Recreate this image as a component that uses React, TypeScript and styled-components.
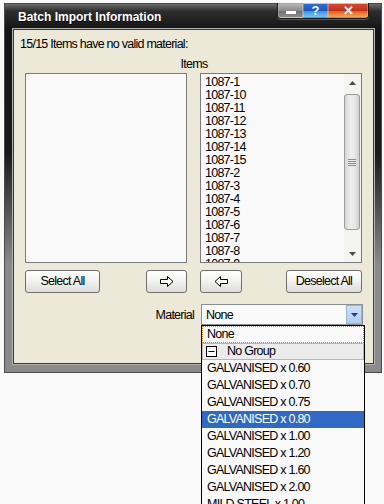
import { createGlobalStyle, styled } from "styled-components";

const UI_FONT = `"Liberation Sans", Arial, sans-serif`;

const GlobalStyle = createGlobalStyle`
  html, body {
    margin: 0;
    padding: 0;
    background: #f9f9f9;
  }
  body {
    width: 384px;
    height: 504px;
    overflow: hidden;
    font-family: ${UI_FONT};
    font-size: 12.5px;
    letter-spacing: -0.75px;
    color: #000;
  }
`;

const Page = styled.div`
  width: 384px;
  height: 504px;
  padding: 3px 0 0 4px;
  box-sizing: border-box;
`;

const Window = styled.div`
  width: 378px;
  box-sizing: border-box;
  border: 1px solid #4a4a4a;
  padding: 0 7px 8px 8px;
  background: linear-gradient(
    to bottom,
    #6c6c6c 0px,
    #2e2e2e 7px,
    #141414 26px,
    #1a1a1a 150px,
    #8a8a8a 260px,
    #8a8a8a 100%
  );
`;

const TitleBar = styled.div`
  height: 25px;
  display: flex;
  align-items: flex-start;
  justify-content: space-between;
  margin: 0 5px 0 5px;
`;

const Title = styled.span`
  font-family: "Liberation Sans", Arial, sans-serif;
  font-weight: bold;
  font-size: 12px;
  letter-spacing: 0;
  line-height: 25px;
  padding-top: 1px;
  color: #fff;
  text-shadow: 0 1px 0 #000;
`;

const CaptionButtons = styled.div`
  display: flex;
  margin-top: -1px;
  padding: 0 1px 1px 1px;
  background: #1c1c1c;
  border-radius: 0 0 4px 4px;
  box-shadow: 0 1px 0 #555;
`;

const CaptionButton = styled.div<{ $kind: "min" | "help" | "close" }>`
  width: ${(p) => (p.$kind === "close" ? 40 : 25)}px;
  height: 15px;
  box-sizing: border-box;
  border: 1px solid rgba(255, 255, 255, 0.25);
  border-radius: ${(p) =>
    p.$kind === "min" ? "0 0 0 3px" : p.$kind === "close" ? "0 0 3px 0" : "0"};
  display: flex;
  align-items: center;
  justify-content: center;
  color: #fff;
  font-family: "Liberation Sans", Arial, sans-serif;
  font-weight: bold;
  font-size: 13px;
  letter-spacing: 0;
  background: ${(p) =>
    p.$kind === "min"
      ? "linear-gradient(to bottom, #b4b4b4, #8a8a8a 50%, #6e6e6e 51%, #8c8c8c)"
      : p.$kind === "help"
      ? "linear-gradient(to bottom, #2d6fd6, #1b56c0 50%, #3a8ee0 51%, #74c6f4)"
      : "linear-gradient(to bottom, #d84a2c, #c0301a 50%, #e0561e 51%, #f4a84c)"};
`;

const MinDash = styled.div`
  width: 10px;
  height: 3px;
  background: #fff;
  margin-top: 3px;
`;

const Client = styled.div`
  background: #ece9d8;
  border: 1px solid #3a3a3a;
  box-shadow: 0 0 0 1px #b2b2b2;
  padding: 7px 10px 38px 11px;
  position: relative;
`;

const Heading = styled.div`
  line-height: 15px;
  margin-left: -5px;
  white-space: nowrap;
`;

const ColumnsLabel = styled.div`
  line-height: 15px;
  text-align: center;
  margin: 5px 0 1px;
`;

const TwoCols = styled.div`
  display: grid;
  grid-template-columns: 162px 162px;
  column-gap: 13px;
`;

const ListBox = styled.div`
  height: 190px;
  box-sizing: border-box;
  border: 1px solid #7a7a7a;
  background: #f9f9f9;
  display: flex;
  overflow: hidden;
`;

const ListItems = styled.div`
  flex: 1;
  padding: 2px 0 0 4px;
  overflow: hidden;
`;

const ListItem = styled.div`
  height: 13px;
  line-height: 13px;
  white-space: nowrap;
`;

const ScrollBar = styled.div`
  width: 17px;
  display: flex;
  flex-direction: column;
  background: #f4f4f1;
`;

const ScrollArrow = styled.div`
  height: 17px;
  display: flex;
  align-items: center;
  justify-content: center;
`;

const ScrollTrack = styled.div`
  flex: 1;
  padding: 3px 1px 0 0;
`;

const Thumb = styled.div`
  height: 136px;
  box-sizing: border-box;
  border: 1px solid #9c9c9c;
  border-radius: 3px;
  background: linear-gradient(to right, #d6d6d4, #eeeeec 40%, #e6e6e4 70%, #cfcfcd);
  display: flex;
  align-items: center;
  justify-content: center;
`;

const ButtonGroup = styled.div`
  display: flex;
  justify-content: space-between;
`;

const ButtonRow = styled(TwoCols)`
  margin-top: 7px;
`;

const PushButton = styled.div<{ $w: number }>`
  width: ${(p) => p.$w}px;
  height: 23px;
  box-sizing: border-box;
  border: 1px solid #6f6f6f;
  border-radius: 3px;
  background: linear-gradient(to bottom, #ffffff, #f3f3f1 45%, #dcdcda 100%);
  display: flex;
  align-items: center;
  justify-content: center;
  line-height: 15px;
  white-space: nowrap;
`;

const MaterialRow = styled.div`
  display: flex;
  justify-content: flex-end;
  align-items: center;
  gap: 7px;
  margin-top: 11px;
`;

const Combo = styled.div`
  position: relative;
  width: 162px;
  height: 21px;
  box-sizing: border-box;
  border: 1px solid #8a8f96;
  background: #f9f9f9;
  display: flex;
  align-items: center;
  padding-left: 4px;
`;

const ComboText = styled.span`
  flex: 1;
`;

const ComboButton = styled.div`
  width: 16px;
  height: 19px;
  box-sizing: border-box;
  border: 1px solid #9bb4db;
  background: linear-gradient(to bottom, #cfe0f7, #b4cbee);
  display: flex;
  align-items: center;
  justify-content: center;
`;

const DropList = styled.div`
  position: absolute;
  top: 20px;
  left: -1px;
  width: 164px;
  box-sizing: border-box;
  border: 1px solid #000;
  background: #f9f9f9;
  z-index: 10;
`;

const DropItem = styled.div<{ $selected?: boolean; $focused?: boolean }>`
  height: 17px;
  padding-left: 4px;
  box-sizing: border-box;
  white-space: nowrap;
  background: ${(p) => (p.$selected ? "#316ac5" : "transparent")};
  color: ${(p) => (p.$selected ? "#fff" : "#000")};
  border: 1px dotted ${(p) => (p.$focused ? "#c8861a" : "transparent")};
  line-height: 15px;
`;

const GroupItem = styled.div`
  height: 17px;
  box-sizing: border-box;
  border: 1px solid #b6b6b6;
  background: #ececec;
  display: flex;
  align-items: center;
  padding-left: 3px;
  gap: 10px;
  line-height: 15px;
`;

const items = [
  "1087-1",
  "1087-10",
  "1087-11",
  "1087-12",
  "1087-13",
  "1087-14",
  "1087-15",
  "1087-2",
  "1087-3",
  "1087-4",
  "1087-5",
  "1087-6",
  "1087-7",
  "1087-8",
  "1087-9",
];

const materials = [
  "GALVANISED x 0.60",
  "GALVANISED x 0.70",
  "GALVANISED x 0.75",
  "GALVANISED x 0.80",
  "GALVANISED x 1.00",
  "GALVANISED x 1.20",
  "GALVANISED x 1.60",
  "GALVANISED x 2.00",
  "MILD STEEL x 1.00",
];

const Arrow = ({ left }: { left?: boolean }) => (
  <svg width="15" height="11" viewBox="0 0 15 11">
    <polygon
      points={left ? "1,5.5 6.5,0.5 6.5,3.5 13.5,3.5 13.5,7.5 6.5,7.5 6.5,10.5" : "14,5.5 8.5,0.5 8.5,3.5 1.5,3.5 1.5,7.5 8.5,7.5 8.5,10.5"}
      fill="#fff"
      stroke="#000"
      strokeWidth="1"
    />
  </svg>
);

const Triangle = ({ up, color = "#4a4a4a" }: { up?: boolean; color?: string }) => (
  <svg width="7" height="4" viewBox="0 0 7 4">
    <polygon points={up ? "0,4 7,4 3.5,0" : "0,0 7,0 3.5,4"} fill={color} />
  </svg>
);

const Grip = () => (
  <svg width="8" height="7" viewBox="0 0 8 7">
    <path d="M0 0.5H8M0 2.5H8M0 4.5H8M0 6.5H8" stroke="#8c8c8c" strokeWidth="1" />
  </svg>
);

const MinusBox = () => (
  <svg width="11" height="11" viewBox="0 0 11 11">
    <rect x="0.5" y="0.5" width="10" height="10" fill="#f9f9f9" stroke="#000" />
    <path d="M2.5 5.5H8.5" stroke="#000" />
  </svg>
);

export default function App() {
  return (
    <>
      <GlobalStyle />
      <Page>
        <Window>
          <TitleBar>
            <Title>Batch Import Information</Title>
            <CaptionButtons>
              <CaptionButton $kind="min">
                <MinDash />
              </CaptionButton>
              <CaptionButton $kind="help">?</CaptionButton>
              <CaptionButton $kind="close">✕</CaptionButton>
            </CaptionButtons>
          </TitleBar>
          <Client>
            <Heading>15/15 Items have no valid material:</Heading>
            <ColumnsLabel>Items</ColumnsLabel>
            <TwoCols>
              <ListBox />
              <ListBox>
                <ListItems>
                  {items.map((it) => (
                    <ListItem key={it}>{it}</ListItem>
                  ))}
                </ListItems>
                <ScrollBar>
                  <ScrollArrow>
                    <Triangle up />
                  </ScrollArrow>
                  <ScrollTrack>
                    <Thumb>
                      <Grip />
                    </Thumb>
                  </ScrollTrack>
                  <ScrollArrow>
                    <Triangle />
                  </ScrollArrow>
                </ScrollBar>
              </ListBox>
            </TwoCols>
            <ButtonRow>
              <ButtonGroup>
                <PushButton $w={75}>Select All</PushButton>
                <PushButton $w={41}>
                  <Arrow />
                </PushButton>
              </ButtonGroup>
              <ButtonGroup>
                <PushButton $w={42}>
                  <Arrow left />
                </PushButton>
                <PushButton $w={76}>Deselect All</PushButton>
              </ButtonGroup>
            </ButtonRow>
            <MaterialRow>
              <span>Material</span>
              <Combo>
                <ComboText>None</ComboText>
                <ComboButton>
                  <Triangle color="#1f3d8a" />
                </ComboButton>
                <DropList>
                  <DropItem $focused>None</DropItem>
                  <GroupItem>
                    <MinusBox />
                    <span>No Group</span>
                  </GroupItem>
                  {materials.map((m) => (
                    <DropItem key={m} $selected={m === "GALVANISED x 0.80"}>
                      {m}
                    </DropItem>
                  ))}
                </DropList>
              </Combo>
            </MaterialRow>
          </Client>
        </Window>
      </Page>
    </>
  );
}
